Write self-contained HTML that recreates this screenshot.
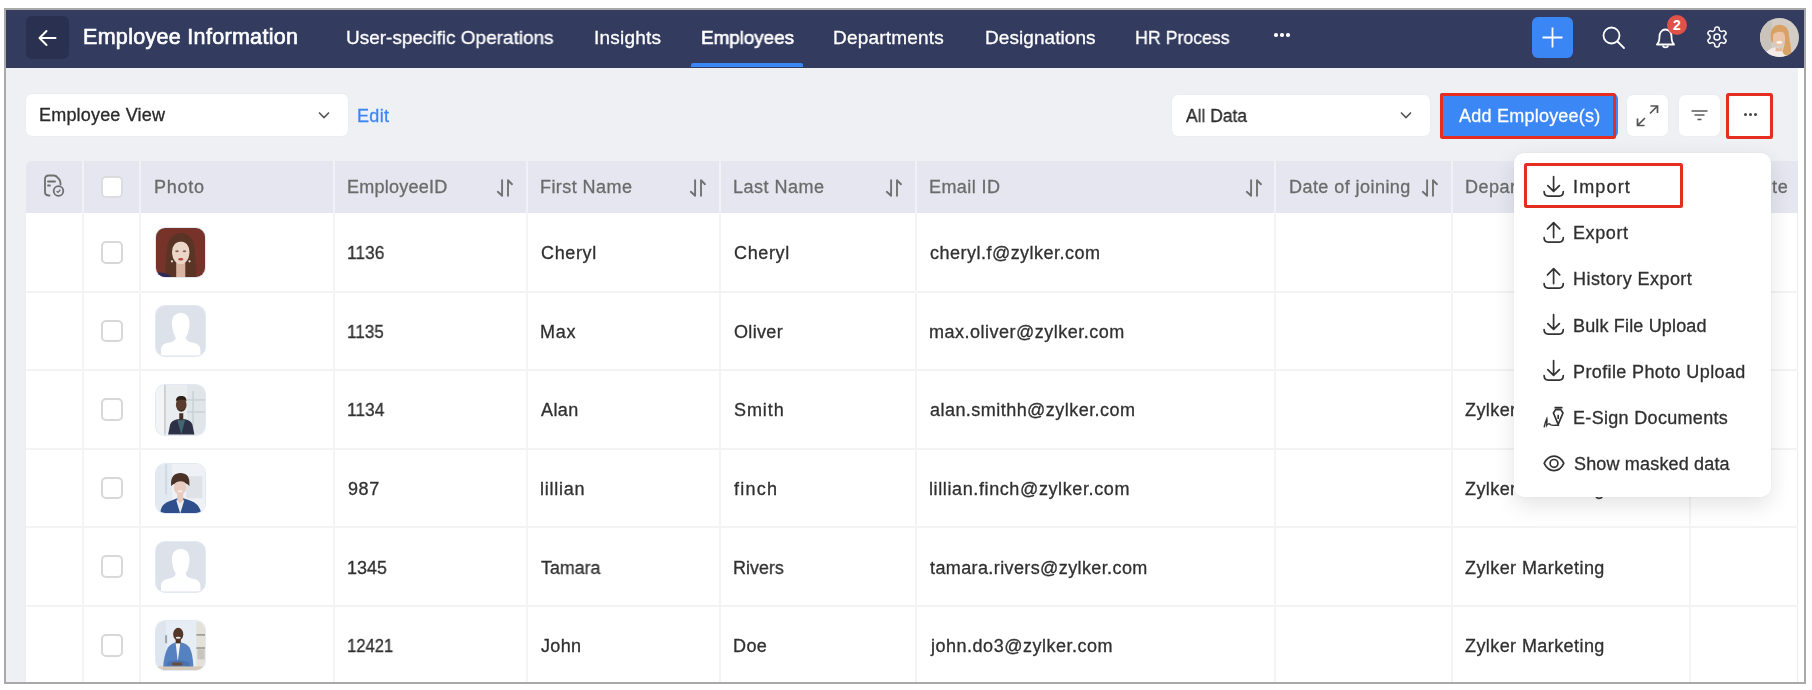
<!DOCTYPE html>
<html><head><meta charset="utf-8">
<style>
*{box-sizing:border-box;margin:0;padding:0}
html,body{width:1812px;height:690px;overflow:hidden;background:#fff;font-family:"Liberation Sans",sans-serif;position:relative}
.a{position:absolute}
.t{white-space:nowrap;line-height:1;will-change:transform;-webkit-text-stroke:0.3px currentColor}
.dot{position:absolute;top:0;width:3.5px;height:3.5px;border-radius:50%;background:#fff}
.dot2{position:absolute;top:0;width:3.2px;height:3.2px;border-radius:50%;background:#444}

.photo{width:49.5px;height:49.5px;border-radius:9px;overflow:hidden;box-shadow:0 0 0 1px #e3e9f2}
.photo svg{display:block}
.p1,.p4{background:#dde1ea}

</style></head>
<body>
<div class="a" style="left:6px;top:10px;width:1798px;height:672px;background:#fff"></div>
<div class="a" style="left:6px;top:10px;width:1798px;height:58px;background:#333b5e"></div>
<div class="a" style="left:26px;top:16px;width:43px;height:43px;background:#2a3150;border-radius:6px"></div>
<svg class="a" style="left:36px;top:27px" width="22" height="22" viewBox="0 0 22 22"><path d="M19.5 11H4 M10.5 4 L3.5 11 L10.5 18" stroke="#fff" stroke-width="2" fill="none" stroke-linecap="round" stroke-linejoin="round"/></svg>
<div class="a t" style="left:82.60px;top:27.20px;font-size:21.5px;color:#fff;font-weight:400;letter-spacing:0.307px;-webkit-text-stroke:0.65px #fff">Employee Information</div>
<div class="a t" style="left:345.60px;top:28.12px;font-size:19px;color:#fff;font-weight:400;letter-spacing:0.000px;transform:scaleX(0.9975);transform-origin:1.00px 0;">User-specific Operations</div>
<div class="a t" style="left:593.60px;top:28.12px;font-size:19px;color:#fff;font-weight:400;letter-spacing:0.203px;">Insights</div>
<div class="a t" style="left:700.60px;top:28.12px;font-size:19px;color:#fff;font-weight:400;letter-spacing:0.000px;transform:scaleX(0.9893);transform-origin:1.00px 0;-webkit-text-stroke:0.6px #fff">Employees</div>
<div class="a t" style="left:833.40px;top:28.12px;font-size:19px;color:#fff;font-weight:400;letter-spacing:0.193px;">Departments</div>
<div class="a t" style="left:984.50px;top:28.12px;font-size:19px;color:#fff;font-weight:400;letter-spacing:0.060px;">Designations</div>
<div class="a t" style="left:1135.00px;top:28.12px;font-size:19px;color:#fff;font-weight:400;letter-spacing:0.000px;transform:scaleX(0.9334);transform-origin:1.00px 0;">HR Process</div>
<div class="a" style="left:691px;top:63px;width:112px;height:4px;background:#3b86f5;border-radius:2px 2px 0 0"></div>
<div class="a" style="left:1274px;top:33px;width:15px;height:4px"><i class="dot" style="left:0"></i><i class="dot" style="left:6px"></i><i class="dot" style="left:12px"></i></div>
<div class="a" style="left:1532px;top:17px;width:41px;height:41px;background:#3b86f5;border-radius:6px"></div>
<svg class="a" style="left:1532px;top:17px" width="41" height="41" viewBox="0 0 41 41"><path d="M20.5 10.5V30.5 M10.5 20.5H30.5" stroke="#fff" stroke-width="1.8" fill="none"/></svg>
<svg class="a" style="left:1600px;top:24px" width="28" height="28" viewBox="0 0 28 28"><circle cx="11.5" cy="11.5" r="8" stroke="#fff" stroke-width="1.8" fill="none"/><path d="M17.5 17.5L24 24" stroke="#fff" stroke-width="1.8" stroke-linecap="round"/></svg>
<svg class="a" style="left:1652px;top:24px" width="28" height="28" viewBox="0 0 28 28"><path d="M5 20.5 C7 18.5 7.5 16 7.5 12.5 C7.5 8.5 10 5.5 13.5 5.5 C17 5.5 19.5 8.5 19.5 12.5 C19.5 16 20 18.5 22 20.5 Z" stroke="#fff" stroke-width="1.8" fill="none" stroke-linejoin="round"/><path d="M11 21.5 C11 24 16 24 16 21.5" stroke="#fff" stroke-width="1.8" fill="none"/></svg>
<div class="a" style="left:1667px;top:15px;width:20px;height:20px;border-radius:50%;background:#e0514a;color:#fff;font-size:14px;font-weight:700;text-align:center;line-height:20px">2</div>
<svg class="a" style="left:1705.3px;top:25px" width="24" height="24" viewBox="0 0 24 24"><path d="M12.22 2h-.44a2 2 0 0 0-2 2v.18a2 2 0 0 1-1 1.73l-.43.25a2 2 0 0 1-2 0l-.15-.08a2 2 0 0 0-2.73.73l-.22.38a2 2 0 0 0 .73 2.73l.15.1a2 2 0 0 1 1 1.72v.51a2 2 0 0 1-1 1.74l-.15.09a2 2 0 0 0-.73 2.730l.22.38a2 2 0 0 0 2.73.73l.15-.08a2 2 0 0 1 2 0l.43.25a2 2 0 0 1 1 1.73V20a2 2 0 0 0 2 2h.44a2 2 0 0 0 2-2v-.18a2 2 0 0 1 1-1.73l.43-.25a2 2 0 0 1 2 0l.15.08a2 2 0 0 0 2.73-.73l.22-.39a2 2 0 0 0-.73-2.73l-.15-.08a2 2 0 0 1-1-1.74v-.5a2 2 0 0 1 1-1.74l.15-.09a2 2 0 0 0 .73-2.73l-.22-.38a2 2 0 0 0-2.73-.73l-.15.08a2 2 0 0 1-2 0l-.43-.25a2 2 0 0 1-1-1.73V4a2 2 0 0 0-2-2z" stroke="#fff" stroke-width="1.5" fill="none"/><circle cx="12" cy="12" r="3" stroke="#fff" stroke-width="1.5" fill="none"/></svg>
<svg class="a" style="left:1759.5px;top:18.2px" width="39" height="39" viewBox="0 0 40 40"><defs><clipPath id="av"><circle cx="20" cy="20" r="20"/></clipPath></defs><g clip-path="url(#av)"><rect width="40" height="40" fill="#d3cdc6"/><rect x="0" width="12" height="40" fill="#c9c3bb"/><path d="M4 40C6 34 10 31 16 30L22 31C26 33 28 36 29 40Z" fill="#f0ebe6"/><path d="M11 22C10 12 14 7 20 7C27 7 30 12 30 20C31 27 33 32 31 38C28 40 24 38 23 34C26 28 26 22 24 18C20 16 15 18 13 26Z" fill="#d8a264"/><ellipse cx="19.5" cy="20.5" rx="6.3" ry="8.3" fill="#ebc3a8"/><path d="M13 17C14 11 18 10 21 10C25 10 27 13 27 17C24 13 17 13 13 17Z" fill="#d8a264"/><ellipse cx="19.8" cy="25" rx="3" ry="1.4" fill="#fbf7f4"/><path d="M16 29C17 31 21 32 23 30L23 34L16 34Z" fill="#e5b89c"/></g></svg>
<div class="a" style="left:6px;top:68px;width:1792px;height:614px;background:#eef0f4"></div>
<div class="a" style="left:1798px;top:68px;width:6px;height:614px;background:#fff"></div>
<div class="a" style="left:26px;top:94px;width:321.5px;height:42px;background:#fff;border-radius:6px;box-shadow:0 0 2px rgba(0,0,0,0.05)"></div>
<div class="a t" style="left:38.80px;top:106.26px;font-size:18px;color:#2a2a2a;font-weight:400;letter-spacing:0.189px;">Employee View</div>
<svg class="a" style="left:317px;top:109px" width="14" height="12" viewBox="0 0 14 12"><path d="M2 3.5L7 8.5L12 3.5" stroke="#555" stroke-width="1.6" fill="none"/></svg>
<div class="a t" style="left:357.30px;top:106.96px;font-size:18px;color:#3b86f5;font-weight:400;letter-spacing:0.328px;">Edit</div>
<div class="a" style="left:1172px;top:95px;width:258px;height:41px;background:#fff;border-radius:6px;box-shadow:0 0 2px rgba(0,0,0,0.05)"></div>
<div class="a t" style="left:1185.70px;top:107.06px;font-size:18px;color:#2a2a2a;font-weight:400;letter-spacing:0.000px;transform:scaleX(0.9685);transform-origin:0.00px 0;">All Data</div>
<svg class="a" style="left:1399px;top:109px" width="14" height="12" viewBox="0 0 14 12"><path d="M2 3.5L7 8.5L12 3.5" stroke="#555" stroke-width="1.6" fill="none"/></svg>
<div class="a" style="left:1440px;top:93px;width:177.5px;height:45px;background:#3b87f6;border-radius:2px 6px 6px 2px"></div>
<div class="a" style="left:1440px;top:93px;width:175.5px;height:46px;border:3.2px solid #e52e22;border-radius:2.5px"></div>
<div class="a t" style="left:1458.80px;top:107.06px;font-size:18px;color:#fff;font-weight:400;letter-spacing:0.231px;">Add Employee(s)</div>
<div class="a" style="left:1627px;top:95px;width:41px;height:41px;background:#fff;border-radius:6px;box-shadow:0 0 2px rgba(0,0,0,0.05)"></div>
<svg class="a" style="left:1627px;top:95px" width="41" height="41" viewBox="0 0 41 41"><path d="M23.5 11H30.5V18 M30.5 11L23 18.5 M17.5 30.5H10.5V23.5 M10.5 30.5L18 23" stroke="#555" stroke-width="1.7" fill="none"/></svg>
<div class="a" style="left:1679px;top:95px;width:41px;height:41px;background:#fff;border-radius:6px;box-shadow:0 0 2px rgba(0,0,0,0.05)"></div>
<svg class="a" style="left:1679px;top:95px" width="41" height="41" viewBox="0 0 41 41"><path d="M12.5 16H28.5 M15.5 20H25.5 M18.5 24.5H22.5" stroke="#5a5a5a" stroke-width="1.7" fill="none"/></svg>
<div class="a" style="left:1729px;top:96px;width:41px;height:40px;background:#fff;border-radius:4px"></div>
<div class="a" style="left:1726px;top:93px;width:47px;height:45.5px;border:3.2px solid #e52e22;border-radius:2.5px"></div>
<div class="a" style="left:1744px;top:113px;width:14px;height:4px"><i class="dot2" style="left:0"></i><i class="dot2" style="left:5px"></i><i class="dot2" style="left:10px"></i></div>
<div class="a" style="left:26px;top:161px;width:1772px;height:52px;background:#e5e6ef;border-radius:6px 0 0 0"></div>
<div class="a" style="left:26px;top:213px;width:1772px;height:470px;background:#fff"></div>
<div class="a" style="left:82px;top:161px;width:2px;height:52px;background:#f1f1f6"></div>
<div class="a" style="left:82px;top:213px;width:2px;height:470px;background:#f4f4f6"></div>
<div class="a" style="left:139px;top:161px;width:2px;height:52px;background:#f1f1f6"></div>
<div class="a" style="left:139px;top:213px;width:2px;height:470px;background:#f4f4f6"></div>
<div class="a" style="left:333px;top:161px;width:2px;height:52px;background:#f1f1f6"></div>
<div class="a" style="left:333px;top:213px;width:2px;height:470px;background:#f4f4f6"></div>
<div class="a" style="left:526px;top:161px;width:2px;height:52px;background:#f1f1f6"></div>
<div class="a" style="left:526px;top:213px;width:2px;height:470px;background:#f4f4f6"></div>
<div class="a" style="left:719px;top:161px;width:2px;height:52px;background:#f1f1f6"></div>
<div class="a" style="left:719px;top:213px;width:2px;height:470px;background:#f4f4f6"></div>
<div class="a" style="left:915px;top:161px;width:2px;height:52px;background:#f1f1f6"></div>
<div class="a" style="left:915px;top:213px;width:2px;height:470px;background:#f4f4f6"></div>
<div class="a" style="left:1274px;top:161px;width:2px;height:52px;background:#f1f1f6"></div>
<div class="a" style="left:1274px;top:213px;width:2px;height:470px;background:#f4f4f6"></div>
<div class="a" style="left:1451px;top:161px;width:2px;height:52px;background:#f1f1f6"></div>
<div class="a" style="left:1451px;top:213px;width:2px;height:470px;background:#f4f4f6"></div>
<div class="a" style="left:1689px;top:161px;width:2px;height:52px;background:#f1f1f6"></div>
<div class="a" style="left:1689px;top:213px;width:2px;height:470px;background:#f4f4f6"></div>
<div class="a" style="left:1797px;top:213px;width:1px;height:470px;background:#ececf0"></div>
<div class="a" style="left:26px;top:290.6px;width:1772px;height:2px;background:#f3f3f5"></div>
<div class="a" style="left:26px;top:369.2px;width:1772px;height:2px;background:#f3f3f5"></div>
<div class="a" style="left:26px;top:447.8px;width:1772px;height:2px;background:#f3f3f5"></div>
<div class="a" style="left:26px;top:526.4px;width:1772px;height:2px;background:#f3f3f5"></div>
<div class="a" style="left:26px;top:605px;width:1772px;height:2px;background:#f3f3f5"></div>
<svg class="a" style="left:42px;top:173px" width="24" height="26" viewBox="0 0 24 26"><path d="M7.5 22.5H6.5C4.5 22.5 3 21 3 19V6C3 4 4.5 2.5 6.5 2.5H12C14 2.5 15 3.5 16.5 5.5C18 7 18.5 8 18.5 10V11.5" stroke="#6e6e6e" stroke-width="1.8" fill="none" stroke-linecap="round"/><path d="M6 8.5H13 M6 12.5H8" stroke="#6e6e6e" stroke-width="1.8" stroke-linecap="round"/><circle cx="16.5" cy="18" r="4.8" stroke="#6e6e6e" stroke-width="1.8" fill="none"/><path d="M14.6 18.2L16 19.4L18.4 16.8" stroke="#6e6e6e" stroke-width="1.4" fill="none"/></svg>
<div class="a" style="left:101px;top:176px;width:22px;height:22px;background:#fff;border:2px solid #dcdcdf;border-radius:5px"></div>
<div class="a t" style="left:154.00px;top:178.36px;font-size:18px;color:#6b6b6b;font-weight:400;letter-spacing:0.743px;">Photo</div>
<div class="a t" style="left:347.20px;top:178.36px;font-size:18px;color:#6b6b6b;font-weight:400;letter-spacing:0.251px;">EmployeeID</div>
<div class="a t" style="left:540.00px;top:178.36px;font-size:18px;color:#6b6b6b;font-weight:400;letter-spacing:0.435px;">First Name</div>
<div class="a t" style="left:733.00px;top:178.36px;font-size:18px;color:#6b6b6b;font-weight:400;letter-spacing:0.484px;">Last Name</div>
<div class="a t" style="left:929.00px;top:178.36px;font-size:18px;color:#6b6b6b;font-weight:400;letter-spacing:0.431px;">Email ID</div>
<div class="a t" style="left:1289.00px;top:178.36px;font-size:18px;color:#6b6b6b;font-weight:400;letter-spacing:0.445px;">Date of joining</div>
<div class="a t" style="left:1465.30px;top:178.36px;font-size:18px;color:#6b6b6b;font-weight:400;letter-spacing:0.465px;">Department</div>
<div class="a t" style="left:1771.50px;top:178.36px;font-size:18px;color:#6b6b6b;font-weight:400;letter-spacing:0.675px;">te</div>
<svg class="a" style="left:495px;top:179px" width="20" height="20" viewBox="0 0 20 20"><path d="M7.1 1.3V16.8L2.8 12.8 M13 16.8V1.3L17 5.2" stroke="#727272" stroke-width="1.9" fill="none" stroke-linecap="round" stroke-linejoin="round"/></svg>
<svg class="a" style="left:688px;top:179px" width="20" height="20" viewBox="0 0 20 20"><path d="M7.1 1.3V16.8L2.8 12.8 M13 16.8V1.3L17 5.2" stroke="#727272" stroke-width="1.9" fill="none" stroke-linecap="round" stroke-linejoin="round"/></svg>
<svg class="a" style="left:884px;top:179px" width="20" height="20" viewBox="0 0 20 20"><path d="M7.1 1.3V16.8L2.8 12.8 M13 16.8V1.3L17 5.2" stroke="#727272" stroke-width="1.9" fill="none" stroke-linecap="round" stroke-linejoin="round"/></svg>
<svg class="a" style="left:1243.5px;top:179px" width="20" height="20" viewBox="0 0 20 20"><path d="M7.1 1.3V16.8L2.8 12.8 M13 16.8V1.3L17 5.2" stroke="#727272" stroke-width="1.9" fill="none" stroke-linecap="round" stroke-linejoin="round"/></svg>
<svg class="a" style="left:1420px;top:179px" width="20" height="20" viewBox="0 0 20 20"><path d="M7.1 1.3V16.8L2.8 12.8 M13 16.8V1.3L17 5.2" stroke="#727272" stroke-width="1.9" fill="none" stroke-linecap="round" stroke-linejoin="round"/></svg>
<div class="a" style="left:101px;top:241.0px;width:22px;height:22.5px;background:#fff;border:2px solid #d8d8db;border-radius:5px"></div>
<div class="a photo p0" style="left:155.5px;top:227.8px"><svg width="49.5" height="49.5" viewBox="0 0 49 49"><rect width="49" height="49" fill="#77322a"/><path d="M9 49C9 38 10 28 11 20C12 10 18 5 25 5C32 5 37 10 38 20C39 28 40 38 40 49Z" fill="#5a3424"/><path d="M20 34H29V49H20Z" fill="#d9b5a2"/><ellipse cx="24.5" cy="24" rx="8.6" ry="12" fill="#ecd6c8"/><path d="M15.5 20C16 12 20 9 25 9C30 9 33 12 33.5 20C31 15 28 13.5 25 13.5C21 13.5 18 15 15.5 20Z" fill="#5a3424"/><ellipse cx="20.8" cy="23" rx="1.8" ry="0.9" fill="#8a6660"/><ellipse cx="28.2" cy="23" rx="1.8" ry="0.9" fill="#8a6660"/><ellipse cx="24.5" cy="31" rx="2.6" ry="1.2" fill="#b84a40"/><circle cx="15.8" cy="33" r="1.1" fill="#e8e4e4"/><circle cx="33.2" cy="33" r="1.1" fill="#e8e4e4"/><ellipse cx="4" cy="50" rx="11" ry="6" fill="#2b2a5a"/></svg></div>
<div class="a t" style="left:346.80px;top:244.26px;font-size:18px;color:#303030;font-weight:400;letter-spacing:0.000px;transform:scaleX(0.9630);transform-origin:1.00px 0;">1136</div>
<div class="a t" style="left:540.90px;top:244.26px;font-size:18px;color:#303030;font-weight:400;letter-spacing:0.637px;">Cheryl</div>
<div class="a t" style="left:734.20px;top:244.26px;font-size:18px;color:#303030;font-weight:400;letter-spacing:0.637px;">Cheryl</div>
<div class="a t" style="left:930.40px;top:244.26px;font-size:18px;color:#303030;font-weight:400;letter-spacing:0.483px;">cheryl.f@zylker.com</div>
<div class="a" style="left:101px;top:319.59999999999997px;width:22px;height:22.5px;background:#fff;border:2px solid #d8d8db;border-radius:5px"></div>
<div class="a photo p1" style="left:155.5px;top:306.4px"><svg width="49.5" height="49.5" viewBox="0 0 49 49"><path d="M24.5 7C18 7 15 12 16 20C16.5 25 18 29 19.5 31C19.5 34 17 35.5 12 36.5C7 37.5 5 40 5 44V49H44V44C44 40 42 37.5 37 36.5C32 35.5 29.5 34 29.5 31C31 29 32.5 25 33 20C34 12 31 7 24.5 7Z" fill="#fff"/></svg></div>
<div class="a t" style="left:346.80px;top:322.86px;font-size:18px;color:#303030;font-weight:400;letter-spacing:0.000px;transform:scaleX(0.9470);transform-origin:1.00px 0;">1135</div>
<div class="a t" style="left:539.90px;top:322.86px;font-size:18px;color:#303030;font-weight:400;letter-spacing:0.748px;">Max</div>
<div class="a t" style="left:734.20px;top:322.86px;font-size:18px;color:#303030;font-weight:400;letter-spacing:0.338px;">Oliver</div>
<div class="a t" style="left:929.40px;top:322.86px;font-size:18px;color:#303030;font-weight:400;letter-spacing:0.499px;">max.oliver@zylker.com</div>
<div class="a" style="left:101px;top:398.2px;width:22px;height:22.5px;background:#fff;border:2px solid #d8d8db;border-radius:5px"></div>
<div class="a photo p2" style="left:155.5px;top:385.0px"><svg width="49.5" height="49.5" viewBox="0 0 49 49"><rect width="49" height="49" fill="#e9edf0"/><rect x="0" width="8" height="49" fill="#f2f4f5"/><rect x="8" width="1.6" height="49" fill="#c6ccd0"/><rect x="31" width="18" height="49" fill="#dfe5e8"/><rect x="36" y="6" width="1.2" height="43" fill="#c4cdd2"/><rect x="31" y="14" width="18" height="1.5" fill="#c9d1d5"/><rect x="31" y="26" width="18" height="1.5" fill="#c9d1d5"/><path d="M12 49L14 39C15 36 18 35 21 34H29C32 35 35 36 36 39L38 49Z" fill="#2d3147"/><path d="M21 34L25 49L29 34Z" fill="#3f6873"/><path d="M23 28H27V35H23Z" fill="#4a3024"/><ellipse cx="25" cy="19.5" rx="5.3" ry="7" fill="#5a3d2e"/><path d="M19.7 16C20 12 22 11 25 11C28 11 30 12 30.3 16C28 14 22 14 19.7 16Z" fill="#2e2019"/><path d="M21 22C22 26 28 26 29 22C28 27 22 27 21 22Z" fill="#2e2019"/></svg></div>
<div class="a t" style="left:346.80px;top:401.46px;font-size:18px;color:#303030;font-weight:400;letter-spacing:0.000px;transform:scaleX(0.9630);transform-origin:1.00px 0;">1134</div>
<div class="a t" style="left:540.90px;top:401.46px;font-size:18px;color:#303030;font-weight:400;letter-spacing:0.395px;">Alan</div>
<div class="a t" style="left:734.20px;top:401.46px;font-size:18px;color:#303030;font-weight:400;letter-spacing:0.925px;">Smith</div>
<div class="a t" style="left:930.40px;top:401.46px;font-size:18px;color:#303030;font-weight:400;letter-spacing:0.460px;">alan.smithh@zylker.com</div>
<div class="a t" style="left:1465.40px;top:401.46px;font-size:18px;color:#303030;font-weight:400;letter-spacing:0.419px;">Zylker Marketing</div>
<div class="a" style="left:101px;top:476.8px;width:22px;height:22.5px;background:#fff;border:2px solid #d8d8db;border-radius:5px"></div>
<div class="a photo p3" style="left:155.5px;top:463.6px"><svg width="49.5" height="49.5" viewBox="0 0 49 49"><rect width="49" height="49" fill="#eef2f6"/><rect x="0" width="16" height="49" fill="#e2e9f1"/><rect x="9" width="2" height="30" fill="#cfd9e4"/><rect x="30" y="12" width="16" height="22" fill="#dfe3e8"/><path d="M4 49C5 41 9 38 16 36L21 34H27L33 36C39 38 43 41 45 49Z" fill="#2e4e8c"/><path d="M20 36L24 49L28 36Z" fill="#eceef0"/><path d="M21 28H27V36L24 39L21 36Z" fill="#e6cbbd"/><path d="M15 22C14 12 19 9 24 9C30 9 34 12 33 22C31 17 18 17 15 22Z" fill="#4a3226"/><ellipse cx="23.8" cy="23" rx="6.2" ry="7.3" fill="#e7ccbf"/><path d="M17.5 20C18 14 22 13 25 13C28 13 31 15 31 20C28 16 21 16 17.5 20Z" fill="#4a3226"/><ellipse cx="24" cy="27" rx="2.6" ry="1" fill="#f4eeea"/></svg></div>
<div class="a t" style="left:347.80px;top:480.06px;font-size:18px;color:#303030;font-weight:400;letter-spacing:0.589px;">987</div>
<div class="a t" style="left:539.90px;top:480.06px;font-size:18px;color:#303030;font-weight:400;letter-spacing:0.732px;">lillian</div>
<div class="a t" style="left:734.20px;top:480.06px;font-size:18px;color:#303030;font-weight:400;letter-spacing:1.222px;">finch</div>
<div class="a t" style="left:929.40px;top:480.06px;font-size:18px;color:#303030;font-weight:400;letter-spacing:0.612px;">lillian.finch@zylker.com</div>
<div class="a t" style="left:1465.40px;top:480.06px;font-size:18px;color:#303030;font-weight:400;letter-spacing:0.419px;">Zylker Marketing</div>
<div class="a" style="left:101px;top:555.4000000000001px;width:22px;height:22.5px;background:#fff;border:2px solid #d8d8db;border-radius:5px"></div>
<div class="a photo p4" style="left:155.5px;top:542.2px"><svg width="49.5" height="49.5" viewBox="0 0 49 49"><path d="M24.5 7C18 7 15 12 16 20C16.5 25 18 29 19.5 31C19.5 34 17 35.5 12 36.5C7 37.5 5 40 5 44V49H44V44C44 40 42 37.5 37 36.5C32 35.5 29.5 34 29.5 31C31 29 32.5 25 33 20C34 12 31 7 24.5 7Z" fill="#fff"/></svg></div>
<div class="a t" style="left:346.80px;top:558.66px;font-size:18px;color:#303030;font-weight:400;letter-spacing:0.000px;transform:scaleX(0.9966);transform-origin:1.00px 0;">1345</div>
<div class="a t" style="left:540.90px;top:558.66px;font-size:18px;color:#303030;font-weight:400;letter-spacing:0.000px;transform:scaleX(0.9900);transform-origin:0.00px 0;">Tamara</div>
<div class="a t" style="left:733.20px;top:558.66px;font-size:18px;color:#303030;font-weight:400;letter-spacing:0.000px;transform:scaleX(0.9959);transform-origin:1.00px 0;">Rivers</div>
<div class="a t" style="left:930.40px;top:558.66px;font-size:18px;color:#303030;font-weight:400;letter-spacing:0.391px;">tamara.rivers@zylker.com</div>
<div class="a t" style="left:1465.40px;top:558.66px;font-size:18px;color:#303030;font-weight:400;letter-spacing:0.419px;">Zylker Marketing</div>
<div class="a" style="left:101px;top:634.0px;width:22px;height:22.5px;background:#fff;border:2px solid #d8d8db;border-radius:5px"></div>
<div class="a photo p5" style="left:155.5px;top:620.8px"><svg width="49.5" height="49.5" viewBox="0 0 49 49"><rect width="49" height="49" fill="#e7edf4"/><rect x="0" width="10" height="49" fill="#dde5ee"/><rect x="9" y="14" width="2" height="8" fill="#9aa5b4"/><rect x="40" width="9" height="49" fill="#e3e1da"/><rect x="40" y="13" width="9" height="1.5" fill="#9a948a"/><rect x="40" y="26" width="9" height="1.5" fill="#9a948a"/><rect x="41" y="28" width="7" height="10" fill="#c8c5bc"/><path d="M7 49C7 40 9 31 12 26C14 23 17 22 20 21H24C28 22 31 23 33 26C36 31 37 40 37 49Z" fill="#5681c1"/><path d="M19.5 22L21.5 40L24 22Z" fill="#f3f3f3"/><path d="M11 41C15 38 26 38 33 41L33 45C26 43 15 43 11 45Z" fill="#4a72b0"/><path d="M16 41H26V44H16Z" fill="#6b4a3a"/><path d="M19.5 17H24.5V22H19.5Z" fill="#4a3024"/><ellipse cx="22" cy="13" rx="5" ry="6.3" fill="#533628"/><ellipse cx="22" cy="16.5" rx="2.5" ry="1" fill="#eee"/><rect x="0" y="45" width="49" height="4" fill="#d6c9b8"/></svg></div>
<div class="a t" style="left:346.80px;top:637.26px;font-size:18px;color:#303030;font-weight:400;letter-spacing:0.000px;transform:scaleX(0.9216);transform-origin:1.00px 0;">12421</div>
<div class="a t" style="left:540.90px;top:637.26px;font-size:18px;color:#303030;font-weight:400;letter-spacing:0.326px;">John</div>
<div class="a t" style="left:733.20px;top:637.26px;font-size:18px;color:#303030;font-weight:400;letter-spacing:0.395px;">Doe</div>
<div class="a t" style="left:931.40px;top:637.26px;font-size:18px;color:#303030;font-weight:400;letter-spacing:0.513px;">john.do3@zylker.com</div>
<div class="a t" style="left:1465.40px;top:637.26px;font-size:18px;color:#303030;font-weight:400;letter-spacing:0.419px;">Zylker Marketing</div>
<div class="a" style="left:1514px;top:152.5px;width:257px;height:344px;background:#fff;border-radius:10px;box-shadow:0 8px 22px rgba(0,0,0,0.11),0 0 3px rgba(0,0,0,0.05)"></div>
<div class="a t" style="left:1572.70px;top:178.06px;font-size:18px;color:#2f2f2f;font-weight:400;letter-spacing:1.158px;">Import</div>
<svg class="a" style="left:1541px;top:174.50px" width="26" height="24" viewBox="0 0 26 24"><path d="M12.6 1.5V16.2 M6.8 10.6L12.6 16.4L18.4 10.6 M3.1 16.6C3.1 19.6 4.6 21.1 7.2 21.1H18.2C20.8 21.1 22.3 19.6 22.3 16.6" stroke="#333" stroke-width="1.7" fill="none" stroke-linecap="round" stroke-linejoin="round"/></svg>
<div class="a t" style="left:1572.70px;top:224.21px;font-size:18px;color:#2f2f2f;font-weight:400;letter-spacing:0.596px;">Export</div>
<svg class="a" style="left:1541px;top:220.65px" width="26" height="24" viewBox="0 0 26 24"><path d="M12.6 16.6V1.8 M6.5 7.8L12.6 1.7L18.7 7.8 M3.1 16.6C3.1 19.6 4.6 21.1 7.2 21.1H18.2C20.8 21.1 22.3 19.6 22.3 16.6" stroke="#333" stroke-width="1.7" fill="none" stroke-linecap="round" stroke-linejoin="round"/></svg>
<div class="a t" style="left:1572.70px;top:270.36px;font-size:18px;color:#2f2f2f;font-weight:400;letter-spacing:0.444px;">History Export</div>
<svg class="a" style="left:1541px;top:266.80px" width="26" height="24" viewBox="0 0 26 24"><path d="M12.6 16.6V1.8 M6.5 7.8L12.6 1.7L18.7 7.8 M3.1 16.6C3.1 19.6 4.6 21.1 7.2 21.1H18.2C20.8 21.1 22.3 19.6 22.3 16.6" stroke="#333" stroke-width="1.7" fill="none" stroke-linecap="round" stroke-linejoin="round"/></svg>
<div class="a t" style="left:1572.70px;top:316.51px;font-size:18px;color:#2f2f2f;font-weight:400;letter-spacing:0.163px;">Bulk File Upload</div>
<svg class="a" style="left:1541px;top:312.95px" width="26" height="24" viewBox="0 0 26 24"><path d="M12.6 1.5V16.2 M6.8 10.6L12.6 16.4L18.4 10.6 M3.1 16.6C3.1 19.6 4.6 21.1 7.2 21.1H18.2C20.8 21.1 22.3 19.6 22.3 16.6" stroke="#333" stroke-width="1.7" fill="none" stroke-linecap="round" stroke-linejoin="round"/></svg>
<div class="a t" style="left:1572.70px;top:362.66px;font-size:18px;color:#2f2f2f;font-weight:400;letter-spacing:0.379px;">Profile Photo Upload</div>
<svg class="a" style="left:1541px;top:359.10px" width="26" height="24" viewBox="0 0 26 24"><path d="M12.6 1.5V16.2 M6.8 10.6L12.6 16.4L18.4 10.6 M3.1 16.6C3.1 19.6 4.6 21.1 7.2 21.1H18.2C20.8 21.1 22.3 19.6 22.3 16.6" stroke="#333" stroke-width="1.7" fill="none" stroke-linecap="round" stroke-linejoin="round"/></svg>
<div class="a t" style="left:1572.70px;top:408.81px;font-size:18px;color:#2f2f2f;font-weight:400;letter-spacing:0.316px;">E-Sign Documents</div>
<svg class="a" style="left:1541px;top:405.25px" width="26" height="24" viewBox="0 0 26 24"><path d="M14.2 2.7H20.8 M14.6 4.6L12.4 8L17.2 19.4L22 8L19.8 4.6Z" stroke="#333" stroke-width="1.7" fill="none" stroke-linecap="round" stroke-linejoin="round"/><path d="M17.2 9.8V14" stroke="#333" stroke-width="1.6"/><path d="M3.2 21.8C3.8 19 5 15.6 5.9 13.6C6.4 16 5.6 18.6 5.6 20.4C7 18.2 8.4 18.6 9.6 19.8C11 20.8 14 20.2 17.6 20.2" stroke="#333" stroke-width="1.4" fill="none" stroke-linecap="round"/></svg>
<div class="a t" style="left:1573.70px;top:454.96px;font-size:18px;color:#2f2f2f;font-weight:400;letter-spacing:0.168px;">Show masked data</div>
<svg class="a" style="left:1541px;top:451.40px" width="26" height="24" viewBox="0 0 26 24"><path d="M3.2 12.4C5.5 7.6 9 5.2 13 5.2C17 5.2 20.5 7.6 22.8 12.4C20.5 17.2 17 19.6 13 19.6C9 19.6 5.5 17.2 3.2 12.4Z" stroke="#333" stroke-width="1.7" fill="none" stroke-linecap="round" stroke-linejoin="round"/><circle cx="13" cy="12.4" r="3.9" stroke="#333" stroke-width="1.7" fill="none" stroke-linecap="round" stroke-linejoin="round"/></svg>
<div class="a" style="left:1524px;top:163px;width:159px;height:45px;border:3.2px solid #e52e22;border-radius:2.5px"></div>
<div class="a" style="left:4px;top:8px;width:1802px;height:676px;border:2px solid #a9a9a9"></div>
</body></html>
